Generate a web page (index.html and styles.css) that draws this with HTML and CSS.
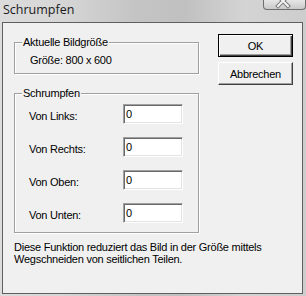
FILE: index.html
```html
<!DOCTYPE html>
<html lang="de">
<head>
  <meta charset="UTF-8">
  <title>Schrumpfen</title>
  <link rel="stylesheet" href="styles.css">
</head>
<body>
  <div class="window">
    <div class="titlebar">
      <span class="title">Schrumpfen</span>
      <div class="close">
        <svg width="43" height="10" viewBox="0 0 43 10">
          <path d="M15 -3 L25 7 M25 -3 L15 7" stroke="#7a7a7a" stroke-width="4" stroke-linecap="square"/>
          <path d="M15 -3 L25 7 M25 -3 L15 7" stroke="#f4f4f4" stroke-width="2" stroke-linecap="square"/>
        </svg>
      </div>
    </div>

    <div class="client">
      <div class="main">
        <div class="group info">
          <span class="legend">Aktuelle Bildgröße</span>
          <p class="size">Größe: 800 x 600</p>
        </div>

        <div class="group shrink">
          <span class="legend">Schrumpfen</span>
          <div class="row"><label>Von Links:</label><input type="text" value="0"></div>
          <div class="row"><label>Von Rechts:</label><input type="text" value="0"></div>
          <div class="row"><label>Von Oben:</label><input type="text" value="0"></div>
          <div class="row"><label>Von Unten:</label><input type="text" value="0"></div>
        </div>
      </div>

      <div class="buttons">
        <button class="btn default">OK</button>
        <button class="btn">Abbrechen</button>
      </div>

      <p class="note">Diese Funktion reduziert das Bild in der Größe mittels<br>Wegschneiden von seitlichen Teilen.</p>
    </div>
  </div>
</body>
</html>
```

FILE: styles.css
```css
body {
  margin: 0;
  background: #f0f0f0;
}

.window {
  width: 306px;
  height: 296px;
  box-sizing: border-box;
  padding: 0 3px 2px 2px;
  background: linear-gradient(90deg, #dcdcdc 0%, #d6d6d6 20%, #c4c4c4 45%, #c0c0c0 60%, #d4d4d4 80%, #cdcdcd 100%);
  display: flex;
  flex-direction: column;
}

.titlebar {
  height: 22px;
  display: flex;
  align-items: flex-start;
  justify-content: space-between;
  margin-right: -3px;
}

.title {
  font-family: "Open Sans", "Noto Sans", sans-serif;
  font-size: 12.5px;
  line-height: 20px;
  color: #1a1a1a;
  padding-left: 1px;
}

.close {
  width: 43px;
  height: 10px;
  box-sizing: border-box;
  border: 1px solid #6e6e6e;
  border-top: none;
  border-radius: 0 0 4px 4px;
  background: linear-gradient(#e6e6e6, #c9c9c9);
  overflow: hidden;
}

.close svg {
  display: block;
  margin: -1px 0 0 -1px;
}

.client {
  flex: 1;
  border: 1px solid #5f5f5f;
  background: #f0f0f0;
  display: grid;
  grid-template-columns: 185px 75px;
  column-gap: 19px;
  align-content: start;
  padding: 11px 0 0 11px;
  font-family: "Liberation Sans", Arial, sans-serif;
  font-size: 11px;
  letter-spacing: -0.25px;
  color: #000;
}

.group {
  box-sizing: border-box;
  border: 1px solid #a0a0a0;
  box-shadow: inset 1px 1px #fff, 1px 1px #fff;
}

.info {
  height: 32px;
  margin-top: 8px;
}

.shrink {
  height: 140px;
  margin-top: 19px;
}

.legend {
  display: block;
  width: fit-content;
  margin: -7px 0 0 7px;
  padding: 0 1px;
  line-height: 13px;
  background: #f0f0f0;
}

.size {
  margin: 5px 0 0 15px;
  line-height: 13px;
}

.row {
  display: flex;
  align-items: center;
  margin: 4px 0 13px 14px;
}

.row + .row {
  margin-top: 0;
}

.row label {
  width: 94px;
  padding-top: 4px;
  line-height: 13px;
}

.row input {
  width: 60px;
  height: 20px;
  box-sizing: border-box;
  margin: 0;
  padding: 0 0 0 2px;
  border: 1px solid;
  border-color: #a0a0a0 #fff #fff #a0a0a0;
  box-shadow: inset 1px 1px #696969, inset -1px -1px #e3e3e3;
  background: #fff;
  font-family: "Liberation Sans", Arial, sans-serif;
  font-size: 11px;
  color: #000;
  outline: none;
}

.buttons {
  display: flex;
  flex-direction: column;
  gap: 5px;
}

.btn {
  width: 75px;
  height: 23px;
  margin: 0;
  padding: 0;
  border: 1px solid;
  border-color: #fff #404040 #404040 #fff;
  box-shadow: inset -1px -1px #a0a0a0;
  background: #f0f0f0;
  font-family: "Liberation Sans", Arial, sans-serif;
  font-size: 11px;
  letter-spacing: -0.25px;
  color: #000;
}

.btn.default {
  border-color: #000;
  box-shadow: inset 1px 1px #fff, inset -1px -1px #404040, inset -2px -2px #a0a0a0;
}

.note {
  grid-column: 1 / -1;
  margin: 8px 0 0 0;
  line-height: 12px;
}
```
